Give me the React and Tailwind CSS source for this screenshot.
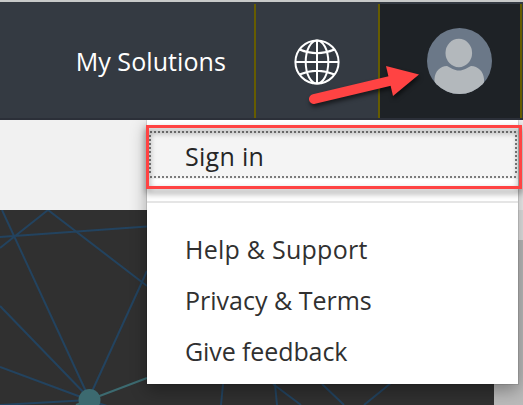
const font = "font-['Open_Sans','Noto_Sans',sans-serif]";

function Globe() {
  return (
    <svg className="mt-px" width="46" height="46" viewBox="-23 -23 46 46" fill="none" stroke="#fff" strokeWidth="2">
      <circle r="21.6" />
      <ellipse rx="11.3" ry="21.6" />
      <path d="M0-21.6V21.6M-21.6 0H21.6M-17.500-12.500Q0-5 17.500-12.500M-17.500 12.500Q0 5 17.500 12.500" />
    </svg>
  );
}

function Avatar() {
  return (
    <svg width="65" height="66" viewBox="0 0 65 66">
      <defs>
        <clipPath id="face"><ellipse cx="32.5" cy="33" rx="32.5" ry="33" /></clipPath>
        <filter id="soft"><feGaussianBlur stdDeviation="0.7" /></filter>
      </defs>
      <g clipPath="url(#face)">
        <rect width="65" height="66" fill="#6b7888" />
        <g filter="url(#soft)" fill="#b3b8bc">
          <path d="M7.5 70V51C8 43 13 38.500 20 38C24 40 27 42.500 32 42.500S40 40 44 38C51 38.500 56.500 43 57 51V70Z" />
          <ellipse cx="31.800" cy="25" rx="13.300" ry="14.200" />
        </g>
      </g>
    </svg>
  );
}

function Network() {
  return (
    <svg className="block shrink-0" width="494" height="195" viewBox="0 210 494 195" fill="none">
      <rect y="210" width="494" height="195" fill="#303030" />
      <g stroke="#23435f" strokeWidth="2">
        <path d="M0 237L147 226.500M0 248L48 210L147 286M2 210L89 398M0 306L89 398M0 367L89 400L107 406M0 405L89 400M147 271L89 398M223 384L221 405M273 384L301 405M275 384L277 405M322 384L344 405M391 383L364 405" />
      </g>
      <path d="M89 400L147 378M76 405L89 400" stroke="#3c6a70" strokeWidth="2" />
      <circle cx="89.500" cy="400" r="11" fill="#3c6a70" />
    </svg>
  );
}

function Arrow() {
  return (
    <svg className="absolute left-0 top-0 pointer-events-none [filter:drop-shadow(1px_3px_2px_#00000090)]" width="523" height="120">
      <path d="M314 99L394 80" stroke="#ff4343" strokeWidth="10" strokeLinecap="round" />
      <path d="M386 66L419 74.500L393 96Z" fill="#ff4343" />
    </svg>
  );
}

export default function App() {
  return (
    <div className={`relative h-[405px] w-[523px] overflow-hidden bg-[#f1f1f1] ${font}`}>
      <header className="h-[120px] border-t-2 border-t-[#c8cac9] border-b-2 border-b-[#2b2f38] bg-[#343a42] pt-[2px]">
        <div className="flex h-full">
          <div className="flex w-[256px] items-center justify-end border-r-2 border-[#665c00] pr-[28px] text-white">
            <span className="whitespace-nowrap pt-[2px] text-[25px] tracking-[0.08px]">My Solutions</span>
          </div>
          <div className="flex w-[124px] items-center justify-center border-r-2 border-[#665c00]"><Globe /></div>
          <div className="flex w-[142px] items-center justify-center border-r-2 border-[#665c00] bg-[#1e2226] pl-[19px]"><Avatar /></div>
        </div>
      </header>
      <div className="h-[90px]" />
      <main className="flex h-[195px]">
        <Network />
        <div className="flex-1 border-t-[30px] border-[#e3e3e3] bg-[#bababa]" />
      </main>

      <div className="absolute left-[147px] top-[120px] h-[264px] w-[371px] bg-white shadow-[0_0_0_1px_#00000018,0_6px_16px_#00000055] [clip-path:inset(0_-30px_-30px_-30px)]">
        <div className="mt-[11px] ml-[2px] h-[48px] w-[369px] bg-[#f4f4f4] pl-[36px] text-[25px] leading-[50px] tracking-[0.3px] text-[#262626]">Sign in</div>
        <div className="mt-[22px] h-[2px] bg-[#e5e5e5]" />
        <nav className="mt-[21px] flex flex-col whitespace-nowrap pl-[38px] text-[25px] leading-[51px] text-[#303030]">
          <span className="tracking-[0.25px]">Help &amp; Support</span>
          <span>Privacy &amp; Terms</span>
          <span className="tracking-[-0.1px]">Give feedback</span>
        </nav>
      </div>

      <svg className="absolute left-[149px] top-[131px]" width="369" height="47" fill="none" stroke="#7b7b7b" strokeWidth="2" strokeDasharray="2 2">
        <path d="M1 1H368M1 46H368M1 4V44M367 4V44" />
      </svg>
      <div className="absolute left-[146px] top-[125px] h-[64px] w-[376px] border-3 border-[#ff4343] [filter:drop-shadow(0_4px_3px_#00000080)]" />
      <Arrow />
    </div>
  );
}
